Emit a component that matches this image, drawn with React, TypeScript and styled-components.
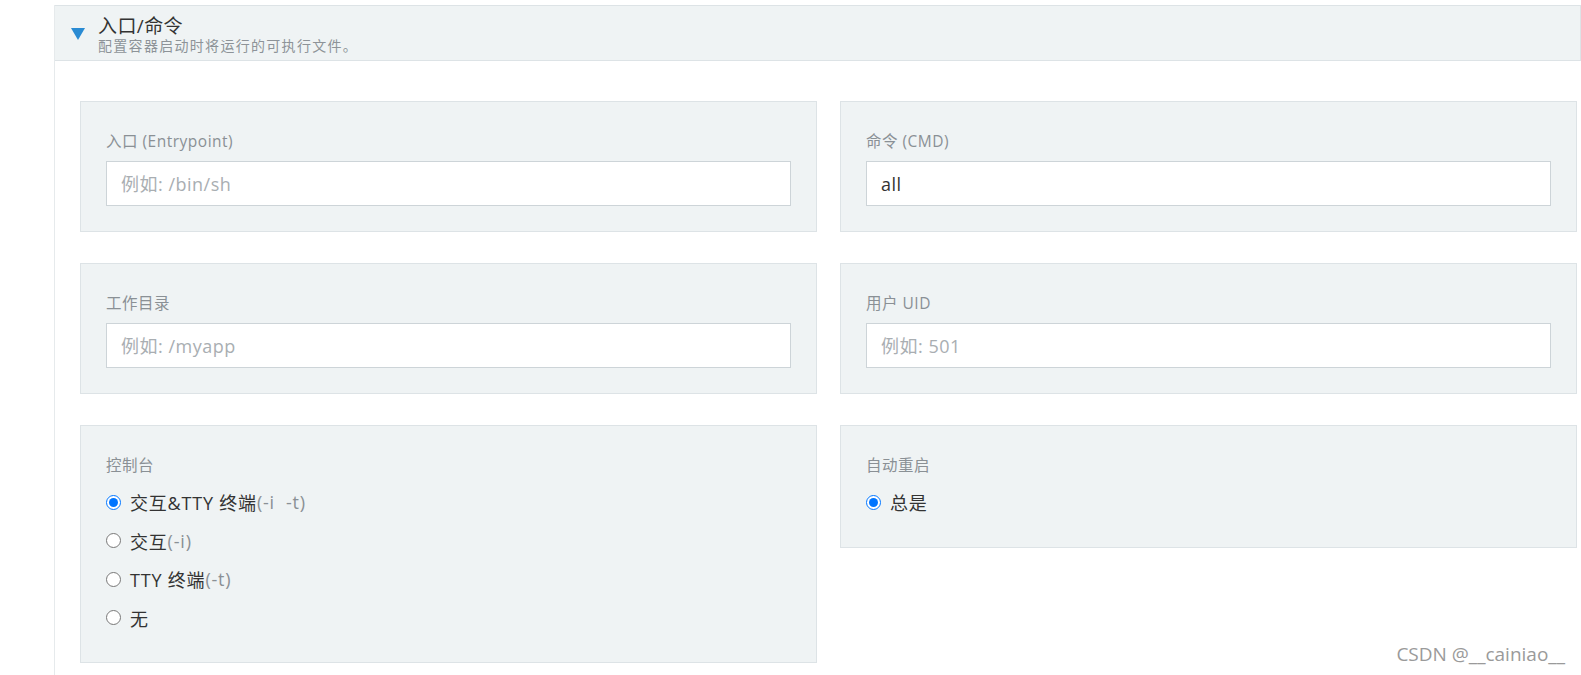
import React from 'react';
import styled, { createGlobalStyle } from 'styled-components';

const GlobalStyle = createGlobalStyle`
  html, body {
    margin: 0;
    padding: 0;
    background: #fff;
    overflow: hidden;
  }
  body {
    font-family: 'Open Sans', 'Noto Sans CJK SC', sans-serif;
    color: #333;
  }
`;

const consoleOptions = [
  { label: '交互&TTY 终端', flag: '(-i  -t)', checked: true },
  { label: '交互', flag: '(-i)', checked: false },
  { label: 'TTY 终端', flag: '(-t)', checked: false },
  { label: '无', flag: '', checked: false },
];

const Page = styled.div`
  position: relative;
  height: 675px;
  padding: 5px 0 0 54px;
  box-sizing: border-box;
`;

const Panel = styled.div`
  border-left: 1px solid #e6eaec;
  height: 100%;
`;

const Header = styled.div`
  display: flex;
  align-items: flex-start;
  height: 56px;
  box-sizing: border-box;
  padding: 10px 16px 5px;
  background: #eff3f4;
  border: 1px solid #dde3e6;
  border-left: none;
`;

const Caret = styled.div`
  width: 0;
  height: 0;
  margin: 12px 13px 0 0;
  border-left: 7.5px solid transparent;
  border-right: 7.5px solid transparent;
  border-top: 12px solid #2a8bd3;
`;

const Title = styled.div`
  font-size: 19px;
  line-height: 20px;
  letter-spacing: 0.4px;
  color: #333;
`;

const Subtitle = styled.div`
  margin-top: 1px;
  font-size: 14px;
  line-height: 18px;
  letter-spacing: 1.3px;
  color: #8d9398;
`;

const Body = styled.div`
  display: grid;
  grid-template-columns: 1fr 1fr;
  align-items: start;
  column-gap: 23px;
  row-gap: 31px;
  padding: 40px 4px 0 25px;
`;

const Card = styled.div`
  background: #eff3f4;
  border: 1px solid #dde3e6;
  padding: 29px 25px 25px;
`;

const Label = styled.div`
  font-size: 15.5px;
  line-height: 20px;
  letter-spacing: 0.5px;
  color: #8a9095;
  margin-bottom: 10px;
`;

const Input = styled.input`
  display: block;
  width: 100%;
  height: 45px;
  box-sizing: border-box;
  border: 1px solid #cdd4d8;
  background: #fff;
  padding: 0 14px;
  font-family: 'Open Sans', 'Noto Sans CJK SC', sans-serif;
  font-size: 18px;
  letter-spacing: 0.5px;
  color: #333;
  outline: none;
  &::placeholder {
    color: #a9aeb2;
  }
`;

const RadioList = styled.div`
  margin-top: -2px;
`;

const RadioRow = styled.label`
  display: flex;
  align-items: center;
  height: 38.5px;
  font-size: 18px;
  letter-spacing: 0.8px;
  color: #333;
  white-space: pre;
`;

const Radio = styled.input`
  width: 15px;
  height: 15px;
  margin: 0 9px 0 0;
`;

const Flag = styled.span`
  color: #8a9095;
`;

const Watermark = styled.div`
  position: absolute;
  right: 16px;
  bottom: 8px;
  font-family: 'Open Sans', sans-serif;
  font-size: 19px;
  color: #9a9a9a;
  text-shadow: 0 0 1px #fff;
`;

export default function App() {
  return (
    <Page>
      <GlobalStyle />
      <Panel>
        <Header>
          <Caret />
          <div>
            <Title>入口/命令</Title>
            <Subtitle>配置容器启动时将运行的可执行文件。</Subtitle>
          </div>
        </Header>
        <Body>
          <Card>
            <Label>入口 (Entrypoint)</Label>
            <Input placeholder="例如: /bin/sh" />
          </Card>
          <Card>
            <Label>命令 (CMD)</Label>
            <Input defaultValue="all" />
          </Card>
          <Card>
            <Label>工作目录</Label>
            <Input placeholder="例如: /myapp" />
          </Card>
          <Card>
            <Label>用户 UID</Label>
            <Input placeholder="例如: 501" />
          </Card>
          <Card>
            <Label>控制台</Label>
            <RadioList>
              {consoleOptions.map((o) => (
                <RadioRow key={o.label}>
                  <Radio type="radio" name="console" defaultChecked={o.checked} />
                  <span>{o.label}</span>
                  {o.flag && <Flag>{o.flag}</Flag>}
                </RadioRow>
              ))}
            </RadioList>
          </Card>
          <Card>
            <Label>自动重启</Label>
            <RadioList>
              <RadioRow>
                <Radio type="radio" name="restart" defaultChecked />
                <span>总是</span>
              </RadioRow>
            </RadioList>
          </Card>
        </Body>
      </Panel>
      <Watermark>CSDN @__cainiao__</Watermark>
    </Page>
  );
}
